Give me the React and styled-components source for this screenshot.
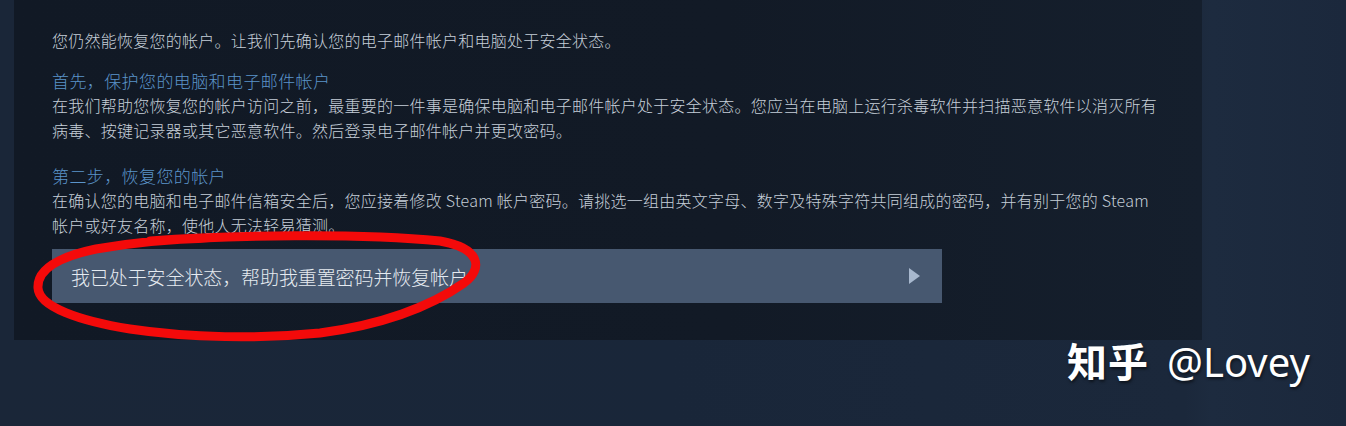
import React from "react";
import styled, { createGlobalStyle } from "styled-components";

const GlobalStyle = createGlobalStyle`
    html, body {
        margin:0;
        padding:0;
        background:#192638;
    }
    body {
        font-family:"Noto Sans CJK SC", "Noto Sans", "Liberation Sans", sans-serif;
    }
`;

const Page = styled.div`
    position:relative;
    width:1346px;
    height:426px;
    overflow:hidden;
    background:linear-gradient(90deg, #1a2638 0%, #192639 50%, #1b283b 88%, #1d2b3f 90%, #1b283c 100%);
    display:flex;
    align-items:flex-start;
`;

const Panel = styled.div`
    margin-left:14px;
    width:1188px;
    height:340px;
    box-sizing:border-box;
    padding:28px 0 0 38px;
    background:linear-gradient(90deg, #111925 0%, #121a26 60%, #151f2d 100%);
`;

const Para = styled.div`
    font-size:16px;
    font-weight:300;
    letter-spacing:0.25px;
    line-height:${p => p.$lh || "24px"};
    color:#c6cfd9;
    white-space:nowrap;
`;

const Section = styled.div`
    margin-top:${p => p.$top}px;
`;

const Heading = styled.div`
    font-size:17px;
    font-weight:300;
    letter-spacing:0.4px;
    line-height:24px;
    color:#5b94ca;
    white-space:nowrap;
`;

const ActionButton = styled.div`
    margin-top:12px;
    width:890px;
    height:54px;
    box-sizing:border-box;
    padding:0 22px 0 19px;
    background:#475870;
    display:flex;
    align-items:center;
    justify-content:space-between;
    color:#e6ebf1;
    font-size:19px;
    font-weight:300;
    letter-spacing:-0.1px;
`;

const Mark = styled.svg`
    position:absolute;
    left:0;
    top:0;
    pointer-events:none;
`;

const Watermark = styled.div`
    position:absolute;
    left:1067px;
    top:334px;
    display:flex;
    align-items:baseline;
    gap:18px;
    color:#ffffff;
    font-size:40px;
    line-height:52px;
    text-shadow:1px 2px 3px rgba(0, 0, 0, 0.55);
    white-space:nowrap;
`;

const Zhihu = styled.span`
    font-weight:700;
    letter-spacing:1px;
`;

const Handle = styled.span`
    font-family:"Noto Sans", "Open Sans", sans-serif;
    font-weight:400;
`;

const App = () =>
    <Page>
        <GlobalStyle />
        <Panel>
            <Para>您仍然能恢复您的帐户。让我们先确认您的电子邮件帐户和电脑处于安全状态。</Para>
            <Section $top={17}>
                <Heading>首先，保护您的电脑和电子邮件帐户</Heading>
                <Para $lh="24.5px">
                    在我们帮助您恢复您的帐户访问之前，最重要的一件事是确保电脑和电子邮件帐户处于安全状态。您应当在电脑上运行杀毒软件并扫描恶意软件以消灭所有<br />
                    病毒、按键记录器或其它恶意软件。然后登录电子邮件帐户并更改密码。
                </Para>
            </Section>
            <Section $top={22}>
                <Heading>第二步，恢复您的帐户</Heading>
                <Para $lh="24.5px">
                    在确认您的电脑和电子邮件信箱安全后，您应接着修改 Steam 帐户密码。请挑选一组由英文字母、数字及特殊字符共同组成的密码，并有别于您的 Steam<br />
                    帐户或好友名称，使他人无法轻易猜测。
                </Para>
            </Section>
            <ActionButton>
                <span>我已处于安全状态，帮助我重置密码并恢复帐户</span>
                <svg width="11" height="16" viewBox="0 0 11 16">
                    <polygon points="0,0 11,8 0,16" fill="#a8b8ce" />
                </svg>
            </ActionButton>
        </Panel>

        <Mark width="1346" height="426" viewBox="0 0 1346 426">
            <path
                d="M150 241 C 230 235, 360 233, 440 241 C 480 248, 484 268, 464 283
                   C 430 307, 380 325, 320 333 C 260 339, 190 338, 130 329
                   C 80 321, 39 307, 38 288 C 37 270, 58 257, 96 249
                   C 130 243, 170 239, 210 238"
                fill="none"
                stroke="#f40a0a"
                strokeWidth="9"
                strokeLinecap="round"
                strokeLinejoin="round"
            />
        </Mark>

        <Watermark>
            <Zhihu>知乎</Zhihu>
            <Handle>@Lovey</Handle>
        </Watermark>
    </Page>

export default App;
